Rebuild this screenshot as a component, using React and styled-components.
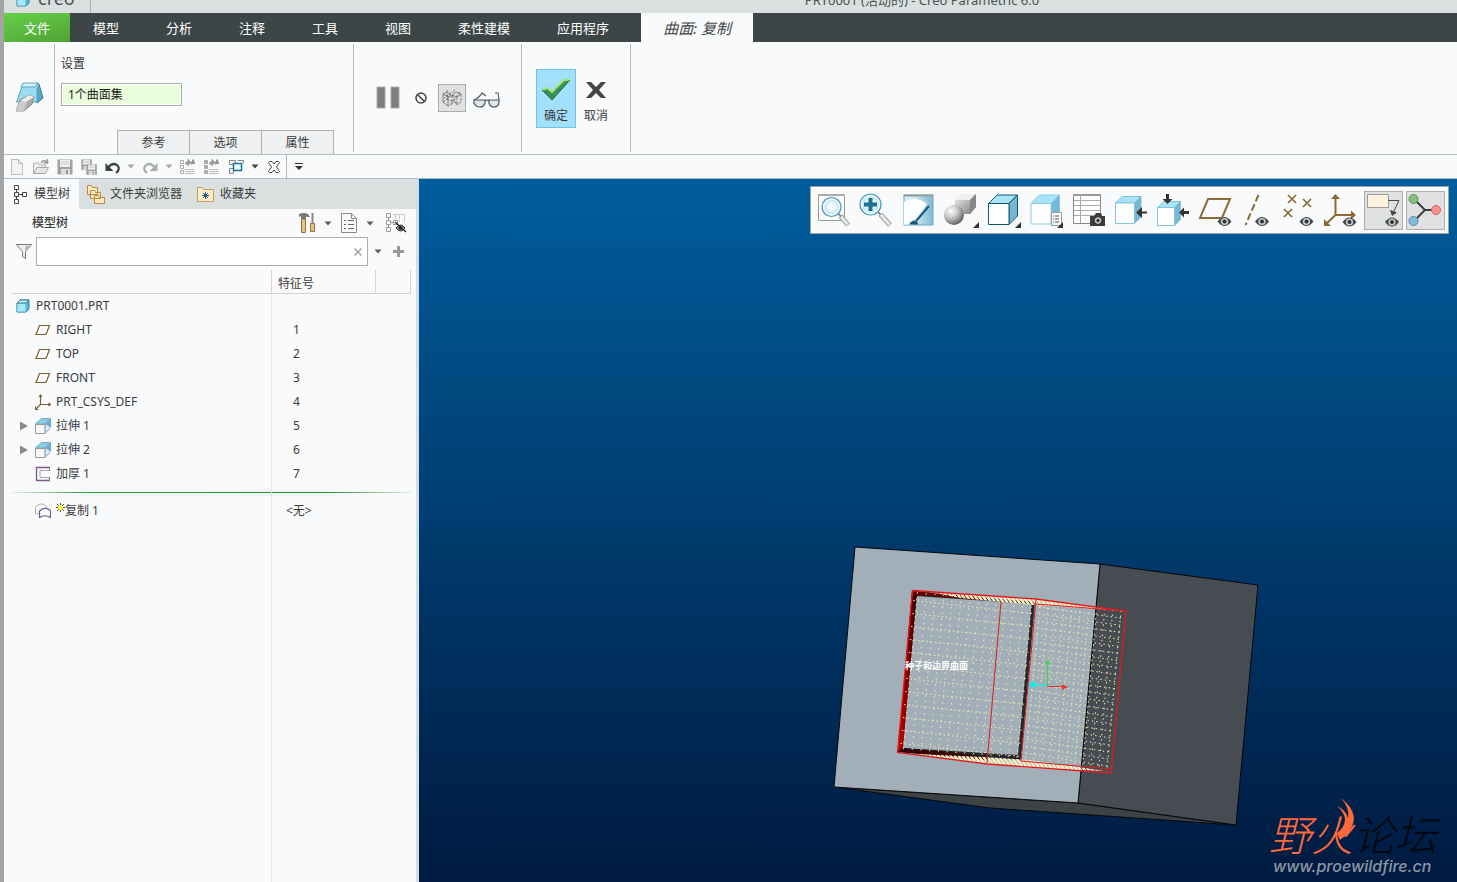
import React, { useState } from "react";
import styled, { createGlobalStyle, css } from "styled-components";

const sans = `"Noto Sans", "Noto Sans CJK SC", sans-serif`;

const GlobalStyle = createGlobalStyle`
  *, *::before, *::after { box-sizing: border-box; }
  body { margin: 0; font-family: ${sans}; font-size: 12px; line-height: 16px; color: #3c3c3c; }
  button, input { font: inherit; color: inherit; margin: 0; }
  svg { display: block; flex: none; }
`;

const Window = styled.div`
  display: flex;
  flex-direction: column;
  min-height: 100vh;
  background: #f8fafc;
  border-left: 4px solid #a5a4a4;
`;

const TitleBar = styled.header`
  display: grid;
  grid-template-columns: 87px 1fr;
  grid-template-rows: 13px;
  align-items: end;
  height: 13px;
  overflow: hidden;
  background: #d9e0df;
  color: #4a5252;
`;

const Brand = styled.div`
  display: flex;
  align-items: flex-end;
  gap: 8px;
  height: 24px;
  padding: 0 0 6px 12px;
  border-right: 1px solid #a9b2b2;
  font-size: 18px;
  line-height: 18px;
`;

const WindowTitle = styled.div`
  padding-bottom: 5px;
  padding-left: 296px;
  text-align: center;
  font-size: 13px;
  line-height: 16px;
`;

const MenuBar = styled.nav`
  display: flex;
  height: 29px;
  background: #3d4647;
`;

const MenuTab = styled.button`
  border: 0;
  padding: 0 20px;
  min-width: 66px;
  background: none;
  color: #fff;
  font-size: 13px;
  line-height: 28px;
  white-space: nowrap;
  margin-right: ${(p) => p.$gap || 0}px;
  ${(p) => p.$kind === "file" && css`background: linear-gradient(165deg, #66cf49, #4fa335);`}
  ${(p) => p.$kind === "current" && css`
    min-width: 112px;
    background: #f8fafc;
    color: #454545;
    font-size: 15px;
    font-style: italic;
  `}
`;

const Ribbon = styled.section`
  display: flex;
  height: 113px;
  padding-top: 2px;
  border-bottom: 1px solid #b3bcbe;
`;

const Group = styled.div`
  display: flex;
  position: relative;
  width: ${(p) => p.$width}px;
  align-items: center;
  justify-content: ${(p) => p.$justify || "flex-start"};
  padding: ${(p) => p.$pad || "0"};
  gap: ${(p) => p.$gap || 0}px;
  &::after {
    content: "";
    position: absolute;
    right: 0;
    top: 0;
    width: 1px;
    height: 108px;
    background: #b4b5b8;
  }
`;

const Settings = styled.div`
  display: flex;
  flex-direction: column;
  width: 100%;
  height: 110px;
  padding-left: 6px;
`;

const SettingLabel = styled.label`
  margin: 12px 0 11px;
  color: #333;
`;

const SurfaceSet = styled.input`
  width: 121px;
  height: 23px;
  padding: 0 6px 2px;
  border: 1px solid #abacae;
  box-shadow: inset 0 0 0 1px #fff;
  background: #eafedc;
  color: #222;
`;

const PanelTabs = styled.div`
  display: flex;
  margin: auto 0 0 56px;
`;

const PanelTab = styled.button`
  width: 73px;
  height: 24px;
  margin-right: -1px;
  padding: 0;
  border: 1px solid #b0b1b4;
  border-bottom: 0;
  background: #eef0f2;
`;

const IconButton = styled.button`
  display: flex;
  align-items: center;
  justify-content: center;
  width: ${(p) => p.$w || 24}px;
  height: ${(p) => p.$h || 24}px;
  padding: 0;
  border: 0;
  background: none;
  ${(p) => p.$pressed && css`
    background: #dfe1e3;
    box-shadow: inset 0 0 0 1px #abadaf;
  `}
`;

const ConfirmButton = styled.button`
  display: flex;
  flex-direction: column;
  align-items: center;
  justify-content: space-between;
  width: 40px;
  height: 59px;
  padding: 6px 0 3px;
  border: 1px solid ${(p) => (p.$primary ? "#70c4e6" : "transparent")};
  background: ${(p) => (p.$primary ? "#a2e0fd" : "none")};
`;

const QuickBar = styled.div`
  display: flex;
  align-items: center;
  height: 24px;
  padding-left: 1px;
  border-bottom: 1px solid #a9bcc4;
`;

const QuickSplit = styled.div`
  width: 1px;
  height: 23px;
  background: #b0b4b6;
`;

const Main = styled.main`
  display: flex;
  flex: 1;
`;

const Sidebar = styled.aside`
  display: flex;
  flex-direction: column;
  width: 415px;
  flex: none;
  border-right: 3px solid #d3dfe6;
  background: #f8fafb;
`;

const SideTabs = styled.div`
  display: flex;
  height: 30px;
  background: #d9e0df;
`;

const SideTab = styled.button`
  display: flex;
  align-items: center;
  gap: 4px;
  padding: 0 ${(p) => (p.$active ? "9px 0 8px" : "7px")};
  border: 0;
  white-space: nowrap;
  background: ${(p) => (p.$active ? "#f8fafb" : "none")};
`;

const TreeHeading = styled.div`
  display: flex;
  align-items: center;
  height: 28px;
  padding: 0 3px 0 28px;
  h2 { margin: 0; flex: 1; font-size: 12px; font-weight: 500; }
`;

const SearchRow = styled.div`
  display: flex;
  align-items: center;
  height: 29px;
  padding: 0 7px 0 8px;
`;

const SearchBox = styled.div`
  display: flex;
  flex: 1;
  height: 29px;
  border: 1px solid #a9b1b2;
  background: #fff;
  input { flex: 1; min-width: 0; border: 0; padding: 0 6px; outline: 0; background: none; }
`;

const Tree = styled.table`
  width: 399px;
  margin: 4px 0 0 8px;
  border-collapse: separate;
  border-spacing: 0;
  table-layout: fixed;
  th {
    height: 24px;
    padding: 4px 6px 0;
    border-right: 1px solid #d3d5d7;
    border-bottom: 1px solid #cfd1d3;
    background: #fafafb;
    font-weight: 400;
    text-align: left;
  }
  th:nth-child(1) { width: 260px; }
  th:nth-child(2) { width: 104px; }
  td { height: 24px; padding: 0; }
  td:first-child { border-right: 1px solid #e6e8ea; }
`;

const TreeBlank = styled.div`
  flex: 1;
  width: 260px;
  margin-left: 8px;
  border-right: 1px solid #e6e8ea;
`;

const NodeCell = styled.div`
  display: flex;
  align-items: center;
  height: 24px;
  gap: 5px;
  padding-left: ${(p) => (p.$root ? 4 : 6)}px;
`;

const Twist = styled.span`
  display: flex;
  justify-content: center;
  width: 12px;
`;

const NodeName = styled.span`
  display: flex;
  margin-left: ${(p) => (p.$root ? 1 : 0)}px;
`;

const FeatureNo = styled.td`
  && { padding-left: ${(p) => (p.$none ? 14 : 21)}px; }
`;

const InsertRow = styled.tr`
  && td { height: 13px; }
  td > div { height: 1px; }
  td:first-child > div { background: linear-gradient(90deg, #e3ebe0, #279a27 30%, #1d901d); }
  td:last-child > div { background: linear-gradient(90deg, #1d901d 40%, #e3ebe0); }
`;

const Viewport = styled.section`
  position: relative;
  flex: 1;
  min-width: 0;
  overflow: hidden;
  background: linear-gradient(#005d9d, #001a40);
`;

const ViewTools = styled.div`
  position: absolute;
  top: 7px;
  right: 8px;
  display: flex;
  justify-content: space-between;
  width: 639px;
  height: 48px;
  padding: 4px 3px;
  border: 1px solid #9ca4a8;
  background: #f8fafc;
`;

const Model = styled.svg`
  position: absolute;
  top: 356px;
  right: 187px;
`;

const Watermark = styled.div`
  position: absolute;
  right: 18px;
  bottom: 6px;
  width: 170px;
  font-style: italic;
  svg { position: absolute; left: 67px; top: -12px; }
`;

const ForumName = styled.div`
  display: flex;
  color: #02060d;
  font-family: "Noto Sans CJK SC", sans-serif;
  font-size: 42px;
  font-weight: 300;
  line-height: 46px;
  white-space: nowrap;
  em { color: #ff6a3c; }
`;

const ForumUrl = styled.div`
  padding-left: 4px;
  color: #8c97a3;
  font-family: Inter, sans-serif;
  font-size: 16px;
  font-weight: 500;
  line-height: 20px;
`;

/* ---------- small shared drawings ---------- */

const Caret = ({ c = "#5a5a5a" }) => (
  <svg width="8" height="5" viewBox="0 0 8 5"><path d="M0.5 0.5h7L4 4.5z" fill={c} /></svg>
);

const Eye = ({ x, y }) => (
  <g transform={`translate(${x} ${y})`}>
    <path d="M-7 0Q0-9 7 0Q0 9-7 0z" fill="#44484b" />
    <circle r="3.6" fill="#c9cdd0" /><circle r="2" fill="#303335" />
  </g>
);

const Corner = () => <path d="M38 31v6h-6z" fill="#333" />;

const Lens = ({ x, y, r }) => {
  const e = r * 0.7;
  return (
    <g>
      <path d={`M${x + e} ${y + e}l3 3`} stroke="#888" strokeWidth="2" />
      <path d={`M${x + e + 2.5} ${y + e + 2.5}L34 34`} stroke="#9b9da0" strokeWidth="5" />
      <path d={`M${x + e + 3} ${y + e + 3}L33.5 33.5`} stroke="#e8e9ea" strokeWidth="3" />
      <circle cx={x} cy={y} r={r} fill="#d8f1fc" stroke="#4c9ac0" strokeWidth="1.2" />
      <circle cx={x} cy={y} r={r - 1.7} fill="url(#lensShade)" stroke="#fff" />
    </g>
  );
};

const Box3d = ({ x, y, w, h, d, line, top = "#a8e4f8", side = "#75b7d3" }) => (
  <g stroke={line} strokeLinejoin="round">
    <path d={`M${x} ${y}l${d}-${d}h${w}l-${d} ${d}z`} fill={top} />
    <path d={`M${x + w} ${y}l${d}-${d}v${h}l-${d} ${d}z`} fill={side} />
    <path d={`M${x} ${y}h${w}v${h}h-${w}z`} fill="#fff" />
  </g>
);

const viewTools = [
  ["重新调整", <g key="g"><path d="M4.5 4.5h26v25h-26z" fill="#fafafa" stroke="#999" /><path d="M4 4h27" stroke="#aaa" strokeWidth="2" /><Lens x={17.5} y={16} r={9.5} /></g>],
  ["放大", <g key="g"><Lens x={14.5} y={13.5} r={10.5} /><path d="M14.5 7v13M8 13.5h13" stroke="#1f7096" strokeWidth="4" /></g>],
  ["重画", <g key="g"><path d="M5 4h29v30H5z" fill="url(#paint)" stroke="#6caac5" /><path d="M5 33.5V11Q17 4 28 13L13 33.5z" fill="#fff" /><path d="M4.5 4.5h30" stroke="#9a9a9a" strokeWidth="2" /><path d="M30 15L17 30" stroke="#17597f" strokeWidth="2" /><path d="M10 33.5q2-4 6-4q3 1 3 4z" fill="#17597f" /></g>],
  ["着色", <g key="g"><path d="M14 9l7-6h14v13l-6 7H14z" fill="url(#shade)" /><path d="M14 9l7-6h14l-6 6z" fill="#eee" /><path d="M29 9l6-6v13l-6 7z" fill="#888" /><circle cx="13" cy="24" r="10" fill="url(#ball)" /><Corner /></g>],
  ["显示样式", <g key="g"><Box3d x={5.5} y={12.5} w={20.5} h={21} d={8.5} line="#10566f" /><Corner /></g>],
  ["已保存方向", <g key="g"><Box3d x={6} y={12.5} w={20} h={20.5} d={8.5} line="#8ccbe4" /><path d="M26.5 21.5h10v13h-10z" fill="#fafafa" stroke="#999" /><path d="M28 25h1m1 0h4m-6 3h1m1 0h4m-6 3h1m1 0h4" stroke="#555" /><Corner /></g>],
  ["视图管理器", <g key="g"><path d="M5.5 3.5h27v29h-27z" fill="#fff" stroke="#888" /><path d="M5 4h28" stroke="#999" strokeWidth="2" /><path d="M12.5 4v28M6 9.5h26M6 14.5h26M6 19.5h26M6 24.5h26" stroke="#aaa" /><path d="M22 25h4l2-3h5l1 3h3v10H22z" fill="#3c3d3f" /><circle cx="30" cy="29.5" r="4" fill="#bbb" stroke="#222" /><circle cx="30" cy="29.5" r="1.5" fill="#222" /></g>],
  ["透视图", <g key="g"><Box3d x={5.5} y={12} w={19} h={20.5} d={6.5} line="#82c3de" /><path d="M37 21.5h-6" stroke="#333" strokeWidth="2" /><path d="M26 21.5l6-5.5v11z" fill="#333" /></g>],
  ["剖视图", <g key="g"><Box3d x={5.5} y={16.5} w={17} h={18} d={6} line="#82c3de" /><path d="M15.5 3v6M37 21.5h-6" stroke="#333" strokeWidth="3" /><path d="M15.5 13l-5-5h10zM27 21.5l5-5v10z" fill="#333" /></g>],
  ["平面显示", <g key="g"><path d="M13 8h22L27 27H5z" fill="none" stroke="#8b6a35" strokeWidth="2" /><Eye x={29.5} y={30.5} /></g>],
  ["轴显示", <g key="g"><path d="M21.5 4L8.5 34" stroke="#8b6a35" strokeWidth="2" strokeDasharray="7 3" /><Eye x={25} y={30.5} /></g>],
  ["点显示", <g key="g"><path d="M9 4l8 8m0-8l-8 8M24 8l8 8m0-8l-8 8M5 18l8 8m0-8l-8 8" stroke="#8b6a35" strokeWidth="1.7" /><Eye x={27.5} y={30.5} /></g>],
  ["坐标系显示", <g key="g"><path d="M14.5 5v19H33M14.5 24L5 33" fill="none" stroke="#8b6a35" strokeWidth="2" /><path d="M10 8l4.5-5L19 8zM30 19.5l5 4.5-5 4.5zM3 28v7h7z" fill="#8b6a35" /><Eye x={28.5} y={31} /></g>],
  ["注释显示", <g key="g"><path d="M3.5 3.5h21v13h-21z" fill="#fff3e0" stroke="#9a9a9a" /><path d="M24.5 9.5H35L29 22" fill="none" stroke="#444" /><path d="M26 19l7 2.500-5 3.500z" fill="#444" /><Eye x={28} y={31} /></g>, true],
  ["旋转中心", <g key="g"><path d="M8 8l11 11L8 30M19 19h11" fill="none" stroke="#3d3d3d" strokeWidth="2" /><circle cx="7.5" cy="8" r="4.5" fill="#88bd83" stroke="#5d905a" /><circle cx="7.5" cy="30" r="4.5" fill="#82bcd9" stroke="#4f8db0" /><circle cx="30" cy="19" r="4.5" fill="#f5928c" stroke="#d25f5a" /></g>, true],
];

const FeatureIcon = ({ kind }) => {
  if (kind === "part")
    return <svg width="14" height="14" viewBox="0 0 14 14" stroke="#2c80a0" strokeLinejoin="round"><path d="M1 4l3-3h9v9l-3 3H1z" fill="#5cb5d6" /><path d="M1 4h9v9H1z" fill="#a5e6fb" stroke="#65b2cd" /><path d="M1 4l3-3h9l-3 3z" fill="#caf1fd" /></svg>;
  if (kind === "plane")
    return <svg width="16" height="16" viewBox="0 0 16 16"><path d="M4.5 3.5h10l-3.5 9H1z" fill="none" stroke="#79602f" strokeWidth="1.2" /></svg>;
  if (kind === "csys")
    return <svg width="16" height="16" viewBox="0 0 16 16"><path d="M5.5 1v9.500H15M5.500 10.500l-5 5M4 3l1.500-2L7 3M13.500 9l2 1.500-2 1.500M0.500 12.500v3h3" fill="none" stroke="#79602f" strokeWidth="1.2" /></svg>;
  if (kind === "extrude")
    return <svg width="16" height="16" viewBox="0 0 16 16"><path d="M0.5 6l6-5.500h9L10 6z" fill="#8fcbe0" stroke="#76aabc" /><path d="M10 6l5.500-5.500v9L10 15.500z" fill="#d9f2fa" stroke="#76aabc" /><path d="M10 6l5.500-5.500v9z" fill="#6eafca" /><path d="M0.500 6.500H10v9H0.500z" fill="#f7f7f7" stroke="#999" /></svg>;
  if (kind === "thicken")
    return <svg width="16" height="16" viewBox="0 0 16 16" fill="none"><path d="M15 1.500h-13.500v13h13.500" stroke="#7b5794" strokeWidth="1.3" /><path d="M15 4.500h-10v7h10" stroke="#aaa" /><path d="M14.500 1v4M14.500 11v4" stroke="#777" /></svg>;
  return <svg width="16" height="16" viewBox="0 0 16 16" fill="#fbfafc"><path d="M0.500 10.500V4Q6-2 11.500 3.500V6" stroke="#aaa" /><path d="M0.500 10.500h3" stroke="#aaa" /><path d="M4.500 14.500V8Q10 3 15.500 7.500v7Q10 11 4.500 14.500z" stroke="#7b5794" strokeWidth="1.2" /></svg>;
};

const rows = [
  { name: "RIGHT", no: "1", icon: "plane" },
  { name: "TOP", no: "2", icon: "plane" },
  { name: "FRONT", no: "3", icon: "plane" },
  { name: "PRT_CSYS_DEF", no: "4", icon: "csys" },
  { name: "拉伸 1", no: "5", icon: "extrude", branch: true },
  { name: "拉伸 2", no: "6", icon: "extrude", branch: true },
  { name: "加厚 1", no: "7", icon: "thicken" },
];

const menus = ["模型", "分析", "注释", "工具", "视图", "柔性建模", "应用程序"];

/* ---------- quick access drawings ---------- */

const Small = ({ children }) => (
  <svg width="16" height="16" viewBox="0 0 16 16" fill="none">{children}</svg>
);

const Disk = ({ x, y, s }) => (
  <g transform={`translate(${x} ${y}) scale(${s})`}>
    <path d="M0.5 0.5h15v15h-15z" fill="#a0a2a3" /><path d="M3 1h10v7H3z" fill="#efefef" /><path d="M4 3h8M4 5h8" stroke="#ccc" /><path d="M4 10h9v6H4z" fill="#ddd" /><path d="M9 11h2v4H9z" fill="#999" />
  </g>
);

const Regen = ({ solid }) => (
  <Small>
    <path d="M1.5 1.5h3v3h-3zM1.5 6.5h3v3h-3zM1.5 11.5h3v3h-3z" stroke="#aaa" fill={solid ? "#aaa" : "none"} />
    <path d="M6 10.5h9M6 12.5h9M6 14.5h9" stroke="#bbb" />
    <path d="M7 6V3.5h3M9 1l2.500 2.500L9 6zM12 4.500h2V2M12.500 4L15.500 4L14 1z" stroke="#929596" strokeWidth="1.3" />
  </Small>
);

const quick = [
  ["新建", 24, <Small key="i"><path d="M2.5 0.5h7l4 4v11h-11z" fill="#f3f3f3" stroke="#bbb" /><path d="M9.5 0.5v4h4" stroke="#bbb" /></Small>],
  ["打开", 24, <Small key="i"><path d="M0.5 14V4h5l1 2h6v3" fill="#eee" stroke="#b0b0b0" /><path d="M0.5 14.5L4 8.5h11.500l-3 6z" fill="#e5e5e5" stroke="#a8a8a8" /><path d="M8 4q2-4 6-1M14.5 0v4h-4" stroke="#999" strokeWidth="1.5" /></Small>],
  ["保存", 24, <Small key="i"><Disk x={0} y={0} s={1} /></Small>],
  ["全部保存", 24, <Small key="i"><Disk x={0} y={0} s={0.7} /><Disk x={5} y={5} s={0.7} /></Small>],
  ["撤消", 24, <Small key="i"><path d="M3 9Q7 3 12 6q4 4-1 8" stroke="#3c4244" strokeWidth="2.2" /><path d="M0.5 4v8h8z" fill="#3c4244" /></Small>],
  ["撤消列表", 12, <Caret key="i" c="#aaa" />],
  ["重做", 26, <Small key="i"><path d="M13 9Q9 3 4 6q-4 4 1 8" stroke="#aaadae" strokeWidth="2.2" /><path d="M15.5 4v8h-8z" fill="#aaadae" /></Small>],
  ["重做列表", 12, <Caret key="i" c="#aaa" />],
  ["重新生成", 24, <Regen key="i" />],
  ["重新生成管理器", 24, <Regen key="i" solid />],
  ["窗口", 26, <Small key="i"><path d="M1.5 1.5h6v4h-6zM9.5 1.5h6v3M1.5 9.5h4v5h-4z" fill="#f4f4f4" stroke="#888" /><path d="M5.5 4.5h8v7h-8z" fill="#eaf8ff" stroke="#1b7397" strokeWidth="1.5" /></Small>],
  ["窗口列表", 12, <Caret key="i" c="#444" />],
  ["关闭", 25, <svg key="i" width="12" height="12" viewBox="0 0 12 12"><path d="M0.5 1.5l1-1h2.500L6 3l2-2.500h2.500l1 1L8.500 6l3 4.500-1 1H8L6 9l-2 2.500H1.500l-1-1L3.500 6z" fill="#fff" stroke="#444" /></svg>],
];

/* ---------- 3D scene ---------- */

const lineSet = (n, from, to) =>
  Array.from({ length: n }, (_, i) => {
    const t = (i + 0.5) / n;
    const m = (a, b) => (a + (b - a) * t).toFixed(1);
    return `M${m(from[0], to[0])} ${m(from[1], to[1])}L${m(from[2], to[2])} ${m(from[3], to[3])}`;
  }).join("");

const Scene = () => (
  <Model width="445" height="300" viewBox="825 535 445 300" role="img" aria-label="模型">
    <defs>
      <pattern id="hatch" width="4" height="10" patternUnits="userSpaceOnUse" patternTransform="skewX(35)">
        <path d="M0 0h3v10H0z" fill="#fbeec0" />
      </pattern>
      <linearGradient id="redFade" x1="0" x2="1"><stop offset="0" stopColor="#c60000" /><stop offset="1" stopColor="#300" /></linearGradient>
    </defs>
    <g stroke="#05080b" strokeLinejoin="round">
      <path d="M834 787L1078 803L1236 825L990 808z" fill="#3d4245" />
      <path d="M1100 564L1258 585L1236 825L1078 803z" fill="#474b52" />
      <path d="M855 547L1100 564L1078 803L834 787z" fill="#a2afb8" />
    </g>
    <path fillRule="evenodd" d="M912 591L1035 602L1021 760L898 752zM916 596L902 748L1018 755L1031.500 604z" fill="#24282b" />
    <path d="M912 591L917 595L903 748L898 752z" fill="url(#redFade)" />
    <path d="M912 591L980 597V600L915 595z" fill="#600000" />
    <path d="M898 752L902 748L950 752L987 757V760z" fill="#350303" />
    <g fill="none" stroke="#f2eeb2" strokeDasharray="1.500 3.500">
      <path d={lineSet(14, [914, 594, 1034, 604], [900, 752, 1020, 764])} strokeWidth="0" />
      <path d={lineSet(12, [914, 594, 1034, 607], [900, 750, 1020, 763])} strokeDasharray="1.500 2.700" />
      <path d={lineSet(14, [913, 592, 899, 750], [1036, 601, 1021, 762])} strokeDasharray="1.500 4.500" />
      <path d={lineSet(22, [1035, 603, 1124, 615], [1021, 756, 1110, 770])} strokeDasharray="1.500 3" />
      <path d={lineSet(11, [1036, 601, 1021, 762], [1125, 611, 1111, 772])} strokeDasharray="1.500 3.700" />
    </g>
    <path d="M930 592L1035 599L1115 610L1080 608L1033 605L960 598z" fill="url(#hatch)" />
    <path d="M915 754L985 757L1030 760L1105 771L1045 769L987 764z" fill="url(#hatch)" />
    <g fill="none" stroke="#e01b20">
      <path d="M912.500 590.500L1036 599L1126 611L1111 773L987 764L897.500 752.500z" strokeWidth="1.300" />
      <path d="M1001 602L987 763M1036 600L1021 761M1036 604L1126 611M1021 761L1111 769" />
    </g>
    <path d="M1047.500 687V664" stroke="#36db44" /><circle cx="1047.500" cy="663" r="2" fill="#36db44" />
    <path d="M1047 686L1033 684.500" stroke="#19e8ee" strokeWidth="1.500" /><circle cx="1032.500" cy="684.500" r="3" fill="#19e8ee" />
    <path d="M1047 686.500h16" stroke="#ee3034" /><path d="M1062 684.500l6 2.500-6 3z" fill="#ee3034" />
    <text x="905" y="669" fill="#fff" fontSize="9" fontWeight="700" fontFamily="'Noto Sans CJK SC', sans-serif">种子和边界曲面</text>
  </Model>
);

const SharedShades = () => (
  <svg width="0" height="0" aria-hidden="true">
    <defs>
      <radialGradient id="lensShade"><stop offset="0.3" stopColor="#fff" stopOpacity="0.7" /><stop offset="1" stopColor="#b9e3f4" /></radialGradient>
      <linearGradient id="paint"><stop offset="0.3" stopColor="#d6edf5" /><stop offset="1" stopColor="#7ebad2" /></linearGradient>
      <linearGradient id="shade" x2="1" y2="1"><stop offset="0" stopColor="#f3f3f3" /><stop offset="1" stopColor="#777" /></linearGradient>
      <radialGradient id="ball" cx="0.35" cy="0.3" r="0.7"><stop offset="0" stopColor="#fff" /><stop offset="0.5" stopColor="#c4c4c4" /><stop offset="1" stopColor="#666" /></radialGradient>
    </defs>
  </svg>
);

export default function App() {
  const [query, setQuery] = useState("");
  const [surfaces, setSurfaces] = useState("1个曲面集");
  return (
    <Window>
      <GlobalStyle />
      <TitleBar>
        <Brand>
          <FeatureIcon kind="part" />
          <span>creo</span>
        </Brand>
        <WindowTitle>PRT0001 (活动的) - Creo Parametric 6.0</WindowTitle>
      </TitleBar>

      <MenuBar>
        <MenuTab $kind="file" $gap={3}>文件</MenuTab>
        {menus.map((m, i) => (
          <MenuTab key={m} $gap={i === menus.length - 1 ? 12 : 7}>{m}</MenuTab>
        ))}
        <MenuTab $kind="current">曲面: 复制</MenuTab>
      </MenuBar>

      <Ribbon>
        <Group $width={51} $justify="center" $pad="0 0 4px">
          <svg width="30" height="32" viewBox="0 0 30 32" strokeLinejoin="round">
            <path d="M21 2l3 1 4 14-6 5z" fill="#58a6c5" stroke="#307e9f" />
            <path d="M8 3L1.500 21H22V8l2-5z" fill="#9cdcf3" stroke="#58a5c1" />
            <path d="M8 2h15l-3 4H6z" fill="#d2f2fd" stroke="#58a5c1" />
            <path d="M5 19l9-5 5 2-2 7-8 7H1z" fill="#aaa" stroke="#8b8b8b" />
            <path d="M4 21h8l-3 9H1z" fill="#ccc" /><path d="M5 20l9-6 5 2-8 5z" fill="#eee" />
          </svg>
        </Group>
        <Group $width={299}>
          <Settings>
            <SettingLabel htmlFor="surface-set">设置</SettingLabel>
            <SurfaceSet id="surface-set" value={surfaces} onChange={(e) => setSurfaces(e.target.value)} />
            <PanelTabs>
              <PanelTab>参考</PanelTab>
              <PanelTab>选项</PanelTab>
              <PanelTab>属性</PanelTab>
            </PanelTabs>
          </Settings>
        </Group>
        <Group $width={168} $pad="0 0 2px 18px" $gap={4}>
          <IconButton $w={32} $h={28} aria-label="暂停">
            <svg width="24" height="24" viewBox="0 0 24 24"><path d="M1 1h8v21H1zM15 1h8v21h-8z" fill="#7e7d80" stroke="#aaa" /></svg>
          </IconButton>
          <IconButton $w={26} $h={28} aria-label="无预览">
            <svg width="12" height="12" viewBox="0 0 12 12" fill="none" stroke="#4b4b4d" strokeWidth="1.6"><circle cx="6" cy="6" r="5" /><path d="M2.5 2.5l7 7" /></svg>
          </IconButton>
          <IconButton $w={28} $h={28} $pressed aria-label="分离预览">
            <svg width="20" height="18" viewBox="0 0 20 18" fill="none" stroke="#666" strokeWidth="0.8"><path d="M1 5l4-2 4 3-3 2-5-3v8l5 4V8M10 6l4-3 5 2-4 3z" /><path d="M15 8v8M19 5v8l-4 3M10 6v9l-4 2M1 13l8-6M9 15L18 3M5 1v9l9 4M13 1L2 9M10 6l5 10" strokeDasharray="3 1" /></svg>
          </IconButton>
          <IconButton $w={34} $h={28} aria-label="校验">
            <svg width="28" height="20" viewBox="0 -4 28 20" fill="#dce7ec" stroke="#55595c" strokeWidth="1.2"><path d="M1 8h11v3q-1 4-5 4t-6-4zM16 8h10v3q-1 4-5 4t-5-4z" /><path d="M12 9q2-2 4 0M1 8Q7 5 9 1l4 3M26 8l-1-7h-3" fill="none" /></svg>
          </IconButton>
        </Group>
        <Group $width={109} $pad="0 0 1px 14px">
          <ConfirmButton $primary>
            <svg width="30" height="28" viewBox="0 0 30 28"><path d="M1 14l5-2 5 4L23 4h6L11 24z" fill="#38905a" /><path d="M1 14l5-2 5 4L23 4h6" fill="none" stroke="#a4e36b" strokeWidth="2" /><path d="M1 14l10 10L29 4" fill="none" stroke="#236b3e" /></svg>
            <span>确定</span>
          </ConfirmButton>
          <ConfirmButton>
            <svg width="30" height="28" viewBox="0 0 30 28"><path d="M5 6h5l5 5 5-5h5l-7 8 7 8h-5l-5-5-5 5H5l7-8z" fill="#454545" /></svg>
            <span>取消</span>
          </ConfirmButton>
        </Group>
      </Ribbon>

      <QuickBar>
        {quick.map(([label, w, icon]) => (
          <IconButton key={label} $w={w} $h={22} aria-label={label}>{icon}</IconButton>
        ))}
        <QuickSplit />
        <IconButton $w={24} $h={22} aria-label="自定义工具栏">
          <svg width="8" height="8" viewBox="0 0 8 8"><path d="M0 0.5h8" stroke="#333" /><path d="M0 3h8L4 7z" fill="#333" /></svg>
        </IconButton>
      </QuickBar>

      <Main>
        <Sidebar>
          <SideTabs>
            <SideTab $active>
              <svg width="18" height="20" viewBox="0 0 18 20" fill="none" stroke="#444"><path d="M2.5 1.5h4v4h-4zM2.5 8.5h4v4h-4zM2.5 15.5h4v4h-4zM10.5 8.5h4v4h-4zM4.5 5.5v3M4.5 12.5v3M6.5 10.5h4" /></svg>
              模型树
            </SideTab>
            <SideTab>
              <svg width="20" height="20" viewBox="0 0 20 20" fill="#ffe9bd" stroke="#b28a42"><path d="M1.5 1.5h4l1 2h5v7h-10zM4.5 6.5h4l1 2h5v6h-10zM8.5 11.5h4l1 2h5v6h-10z" /></svg>
              文件夹浏览器
            </SideTab>
            <SideTab>
              <svg width="20" height="18" viewBox="0 0 20 18"><path d="M1.5 2.5h5l1 2h10v12h-16z" fill="#ffebc4" stroke="#c4a063" /><path d="M9.5 7v7M6 10.5h7M7 8l5 5M12 8l-5 5" stroke="#155d83" /></svg>
              收藏夹
            </SideTab>
          </SideTabs>

          <TreeHeading>
            <h2>模型树</h2>
            <IconButton $w={24} aria-label="设置">
              <svg width="18" height="22" viewBox="0 0 18 22"><path d="M1 2q5-2 9 0l2 3h-3L8 4v3H3V4L1 5z" fill="#777" /><path d="M3.5 7h4v13.500h-4z" fill="#e5c382" stroke="#97733a" /><path d="M14.5 1v10" stroke="#888" strokeWidth="2" /><path d="M12.5 11.5h4v8h-4z" fill="#e5c382" stroke="#97733a" /></svg>
            </IconButton>
            <IconButton $w={18} aria-label="设置列表"><Caret /></IconButton>
            <IconButton $w={24} aria-label="显示">
              <svg width="16" height="20" viewBox="0 0 16 20" fill="none"><path d="M0.5 0.5h10l5 5v14h-15z" fill="#fafafa" stroke="#888" /><path d="M10.5 0.5v5h5" stroke="#888" /><path d="M3 7.5h2m2 0h6M3 11.5h2m2 0h6M3 15.5h2m2 0h6" stroke="#666" /></svg>
            </IconButton>
            <IconButton $w={18} aria-label="显示列表"><Caret /></IconButton>
            <IconButton $w={34} aria-label="隐藏列">
              <svg width="22" height="20" viewBox="0 0 22 20" fill="none"><path d="M1.5 0.5h4v4h-4zM1.5 7.5h4v4h-4zM1.5 14.5h4v4h-4zM8.5 7.5h4v4h-4zM3.5 5v2M3.5 12v2M6 9.5h2" stroke="#999" /><path d="M8 1.5h12M10.500 2v4M14.500 2v7M19.500 2v7" stroke="#ccc" /><path d="M11 15q5-6 9 0-4 6-9 0z" fill="#999" stroke="#333" /><circle cx="15.500" cy="15" r="2" fill="#333" /><path d="M10 9l11 10" stroke="#222" strokeWidth="1.3" /></svg>
            </IconButton>
          </TreeHeading>

          <SearchRow>
            <IconButton $w={24} aria-label="过滤">
              <svg width="16" height="15" viewBox="0 0 16 15"><path d="M0.5 0.5h15l-6 7v7l-3-2v-5z" fill="#eee" stroke="#777" /><path d="M10 2h3L9 7z" fill="#aaa" /></svg>
            </IconButton>
            <SearchBox>
              <input aria-label="搜索模型树" value={query} onChange={(e) => setQuery(e.target.value)} />
              <IconButton $w={18} $h={27} aria-label="清除" onClick={() => setQuery("")}>
                <svg width="8" height="8" viewBox="0 0 8 8"><path d="M0.5 0.5l7 7M7.500 0.500l-7 7" stroke="#999" strokeWidth="1.2" /></svg>
              </IconButton>
            </SearchBox>
            <IconButton $w={19} aria-label="搜索选项"><Caret /></IconButton>
            <IconButton $w={22} aria-label="添加">
              <svg width="11" height="11" viewBox="0 0 11 11"><path d="M5.5 0v11M0 5.5h11" stroke="#999" strokeWidth="3" /></svg>
            </IconButton>
          </SearchRow>

          <Tree>
            <thead>
              <tr><th aria-label="名称" /><th scope="col">特征号</th><th aria-label="其他" /></tr>
            </thead>
            <tbody>
              <tr>
                <td><NodeCell $root><FeatureIcon kind="part" /><NodeName $root>PRT0001.PRT</NodeName></NodeCell></td>
                <td colSpan={2} />
              </tr>
              {rows.map((r) => (
                <tr key={r.name}>
                  <td>
                    <NodeCell>
                      <Twist>{r.branch && <svg width="8" height="10" viewBox="0 0 8 10"><path d="M0 0.5l8 4.500-8 4.500z" fill="#8a8a8a" /></svg>}</Twist>
                      <FeatureIcon kind={r.icon} />
                      <NodeName>{r.name}</NodeName>
                    </NodeCell>
                  </td>
                  <FeatureNo colSpan={2}>{r.no}</FeatureNo>
                </tr>
              ))}
              <InsertRow aria-hidden="true"><td><div /></td><td colSpan={2}><div /></td></InsertRow>
              <tr>
                <td>
                  <NodeCell>
                    <Twist />
                    <FeatureIcon kind="copy" />
                    <NodeName>
                      <svg width="9" height="9" viewBox="0 0 9 9"><path d="M4.5 0v9M0 4.5h9M1 1l7 7M8 1L1 8" stroke="#555" /><circle cx="4.5" cy="4.5" r="2.5" fill="#ff3" /></svg>
                      复制 1
                    </NodeName>
                  </NodeCell>
                </td>
                <FeatureNo $none colSpan={2}>&lt;无&gt;</FeatureNo>
              </tr>
            </tbody>
          </Tree>
          <TreeBlank />
        </Sidebar>

        <Viewport>
          <SharedShades />
          <Scene />
          <ViewTools role="toolbar">
            {viewTools.map(([label, art, on]) => (
              <IconButton key={label} $w={39} $h={39} $pressed={on} aria-label={label}>
                <svg width="39" height="39" viewBox="0 0 39 39" fill="none">{art}</svg>
              </IconButton>
            ))}
          </ViewTools>
          <Watermark>
            <ForumName><em>野火</em>论坛</ForumName>
            <ForumUrl>www.proewildfire.cn</ForumUrl>
            <svg width="20" height="44" viewBox="0 0 20 44"><path d="M5 0Q20 12 17.500 24Q15 34 4 42L1 35Q9 29 9 21Q8 14 1 8Q10 12 12 20Q14 10 5 0z" fill="#ff6a3c" /></svg>
          </Watermark>
        </Viewport>
      </Main>
    </Window>
  );
}
